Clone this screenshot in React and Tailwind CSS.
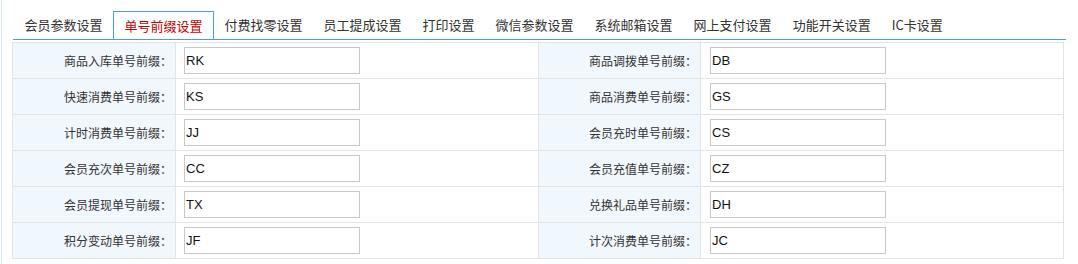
import React from 'react';

const tabs = [
    '会员参数设置',
    '单号前缀设置',
    '付费找零设置',
    '员工提成设置',
    '打印设置',
    '微信参数设置',
    '系统邮箱设置',
    '网上支付设置',
    '功能开关设置',
    'IC卡设置',
];

const rows = [
    ['商品入库单号前缀：', 'RK', '商品调拨单号前缀：', 'DB'],
    ['快速消费单号前缀：', 'KS', '商品消费单号前缀：', 'GS'],
    ['计时消费单号前缀：', 'JJ', '会员充时单号前缀：', 'CS'],
    ['会员充次单号前缀：', 'CC', '会员充值单号前缀：', 'CZ'],
    ['会员提现单号前缀：', 'TX', '兑换礼品单号前缀：', 'DH'],
    ['积分变动单号前缀：', 'JF', '计次消费单号前缀：', 'JC'],
];

const font = { fontFamily: '"Noto Sans CJK SC", "Liberation Sans", sans-serif' };

const Label = ({ text }) => (
    <div className="h-[36px] bg-[#f0f7fd] border-r border-b border-[#e3e3e3] flex items-center justify-end pr-[3px] text-[12px] text-[#333]">
        {text}
    </div>
);

const Value = ({ value, pl }) => (
    <div className={`h-[36px] border-r border-b border-[#e3e3e3] flex items-center ${pl}`}>
        <input
            defaultValue={value}
            className="w-[176px] h-[27px] border border-[#c8c8c8] px-[1px] text-[13px] text-[#111] outline-none font-['Liberation_Sans',sans-serif]"
        />
    </div>
);

const App = () => {
    return (
        <div className="w-[1078px] h-[264px] bg-white overflow-hidden" style={font}>
            <div className="ml-px h-full border-l border-[#dce8f2] pl-[11px] pr-[12px]">
                {/* Tabs */}
                <div className="flex pl-px pt-[11px] border-b border-[#4b9dd6]">
                    {tabs.map((t, i) => (
                        <div
                            key={t}
                            className={`h-[28px] px-[10.5px] flex items-center text-[13px] whitespace-nowrap ${
                                i === 1 ? 'border border-b-0 border-[#4b9dd6] bg-white text-[#cc0000]' : 'text-[#333]'
                            }`}
                        >
                            {t}
                        </div>
                    ))}
                </div>

                {/* Prefix table */}
                <div className="mt-[2px] -ml-px grid grid-cols-[163px_363px_162px_363px] border-t border-l border-[#e3e3e3] w-[1052px]">
                    {rows.map((r) => (
                        <React.Fragment key={r[1]}>
                            <Label text={r[0]} />
                            <Value value={r[1]} pl="pl-[8px]" />
                            <Label text={r[2]} />
                            <Value value={r[3]} pl="pl-[9px]" />
                        </React.Fragment>
                    ))}
                </div>
            </div>
        </div>
    );
};

export default App;
